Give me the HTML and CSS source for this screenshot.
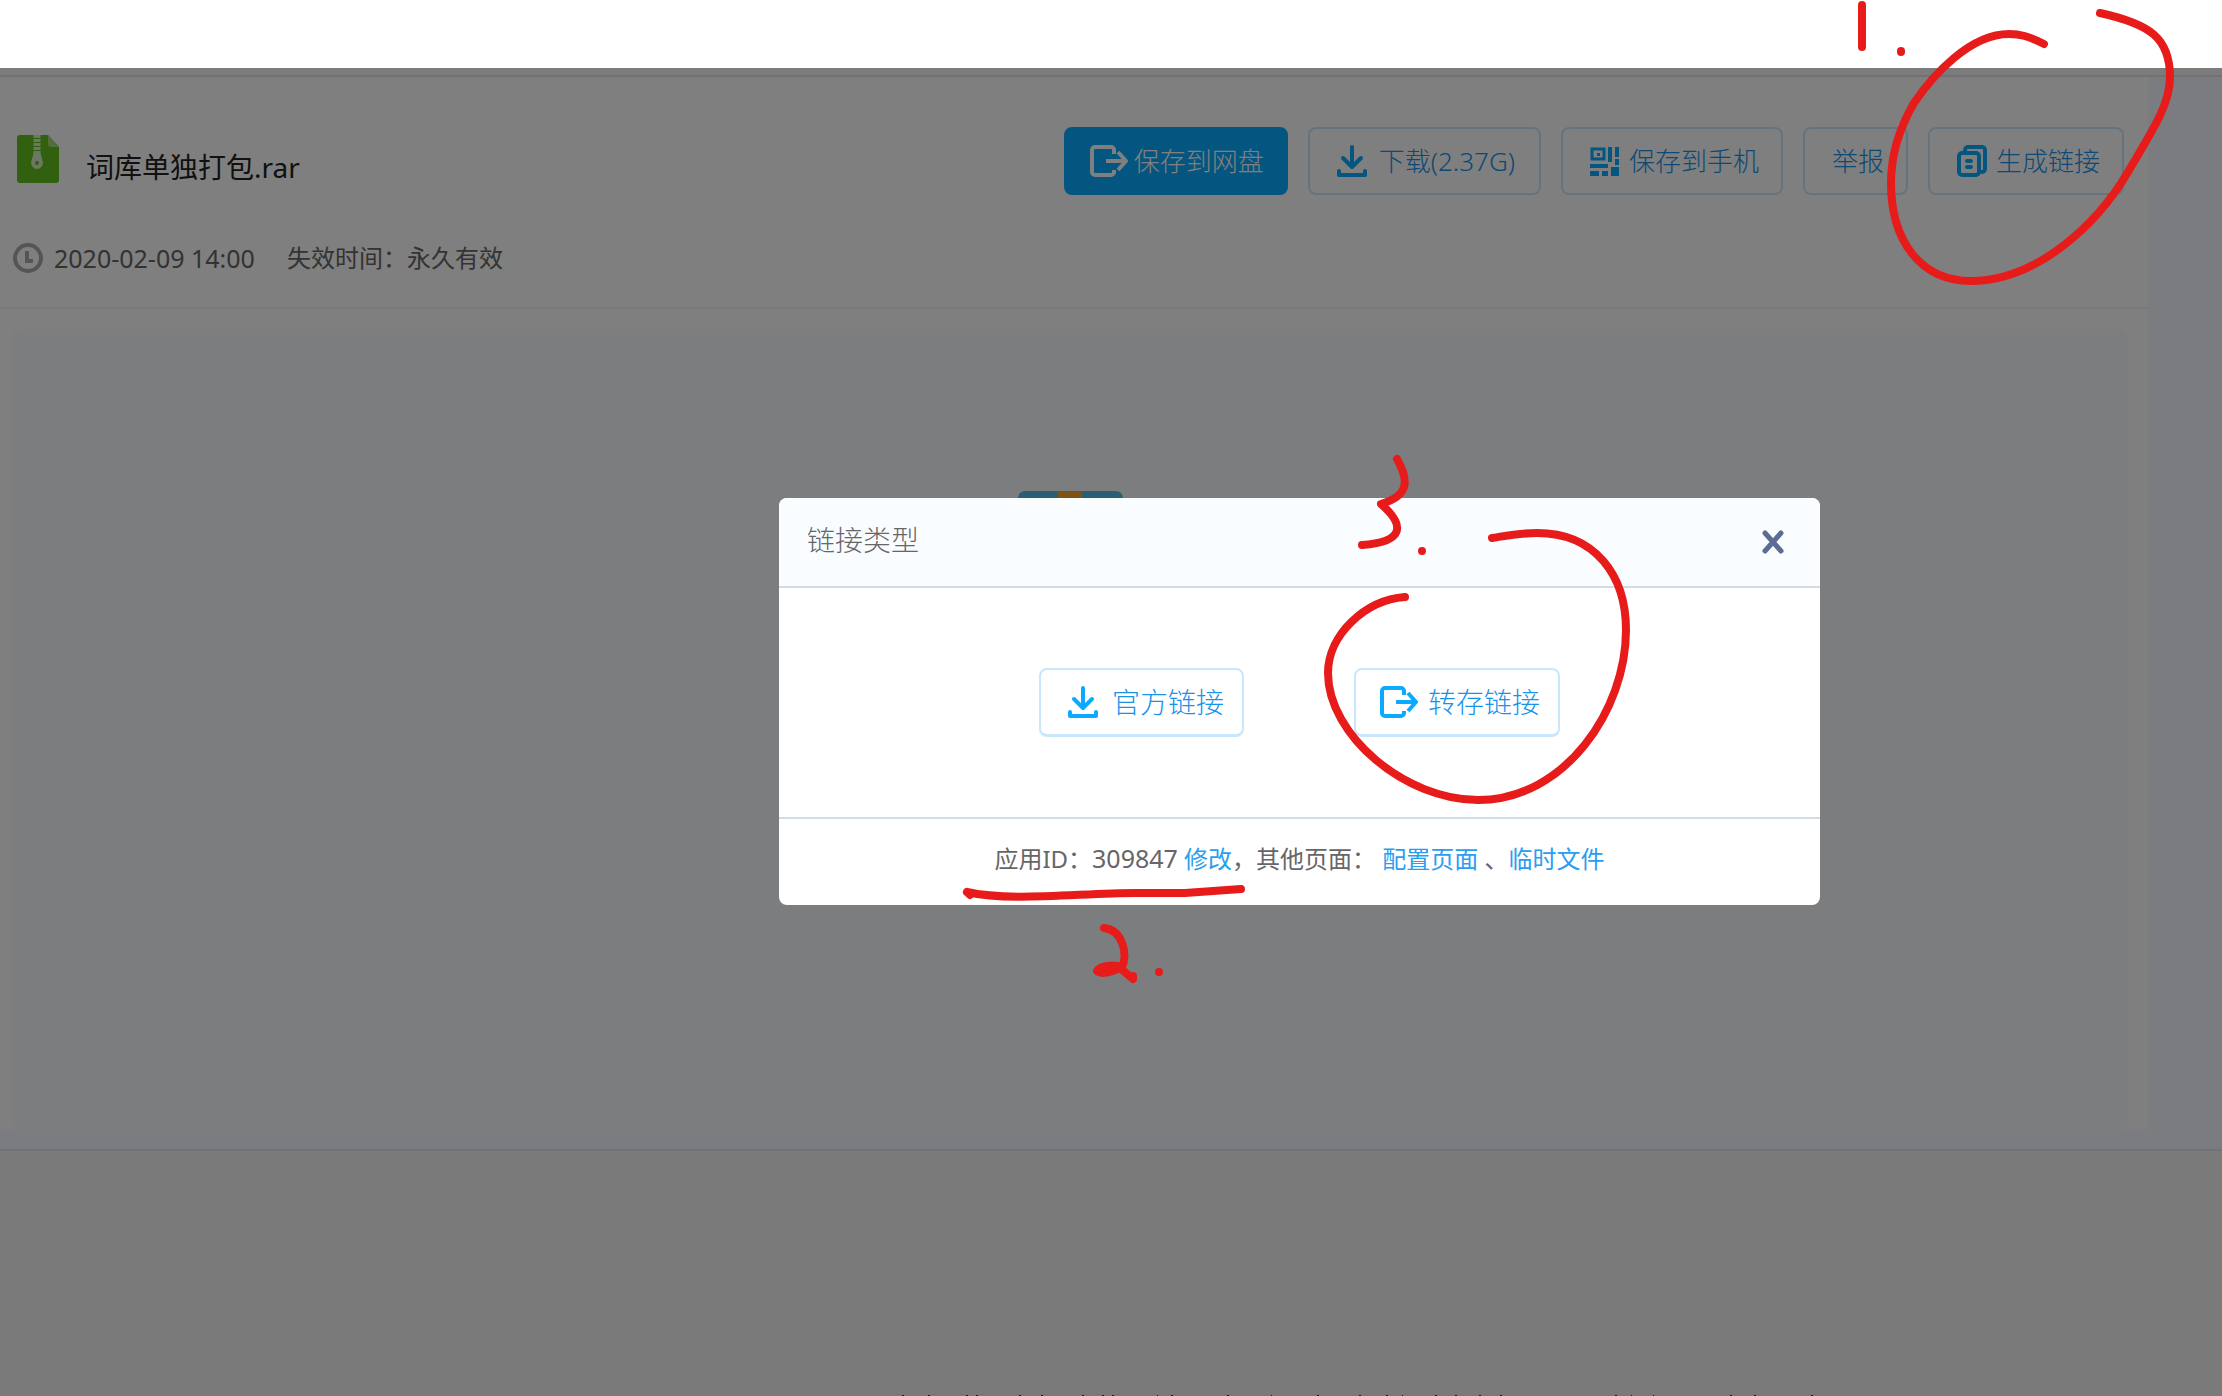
FILE: index.html
```html
<!DOCTYPE html>
<html lang="zh-CN">
<head>
<meta charset="utf-8">
<title>词库单独打包.rar</title>
<link rel="stylesheet" href="styles.css">
</head>
<body>
<svg class="symbols" aria-hidden="true">
  <symbol id="i-save" viewBox="0 0 38 32"><path d="M24 9V5a3 3 0 0 0-3-3H5a3 3 0 0 0-3 3v22a3 3 0 0 0 3 3h16a3 3 0 0 0 3-3v-2M16 16h18M28 7l8 9-8 9" fill="none" stroke="currentColor" stroke-width="4" stroke-linejoin="round"/></symbol>
  <symbol id="i-down" viewBox="0 0 30 32"><path d="M15 2v18M6 13l9 9 9-9" fill="none" stroke="currentColor" stroke-width="4" stroke-linecap="round" stroke-linejoin="round"/><path d="M2 26v4h26v-4" fill="none" stroke="currentColor" stroke-width="4" stroke-linecap="round" stroke-linejoin="round"/></symbol>
  <symbol id="i-qr" viewBox="0 0 30 30"><path d="M2 3h12v10H2z" fill="none" stroke="currentColor" stroke-width="3"/><path d="M7 7h3v3H7zM18 1h4v15h-4zM25 1h4v10h-4zM25 13h4v6h-4zM0 18h18v4H0zM0 25h9v5H0zM12 25h6v5h-6zM21 21h8v9h-8z" fill="currentColor"/></symbol>
  <symbol id="i-copy" viewBox="0 0 30 32"><path d="M8 6V5a3 3 0 0 1 3-3h14a3 3 0 0 1 3 3v19a3 3 0 0 1-3 3h-1" fill="none" stroke="currentColor" stroke-width="4"/><rect x="2" y="8" width="20" height="22" rx="3" fill="none" stroke="currentColor" stroke-width="4"/><path d="M10 16h4M10 22h4" stroke="currentColor" stroke-width="4" stroke-linecap="round"/></symbol>
</svg>
<div class="topbar"></div>
<div class="stage">
  <main class="page">
    <div class="gap"></div>
    <div class="content">
      <section class="card">
        <header class="card-head">
          <div class="file">
            <svg class="file-icon" viewBox="0 0 42 48"><path d="M3 0h28l11 12v33a3 3 0 0 1-3 3H3a3 3 0 0 1-3-3V3a3 3 0 0 1 3-3z" fill="#62c21c"/><path d="M31 0l11 12h-8a3 3 0 0 1-3-3z" fill="#a5dc7c"/><path d="M20 0v19" stroke="#d9efc8" stroke-width="7" stroke-dasharray="3 1"/><path d="M17 17h6l3 10a6 7 0 1 1-12 0z" fill="#d9efc8"/><circle cx="20" cy="28" r="2" fill="#62c21c"/></svg>
            <h1 class="file-name">词库单独打包.rar</h1>
          </div>
          <div class="actions">
            <button class="btn primary"><svg class="ic-save"><use href="#i-save"/></svg>保存到网盘</button>
            <button class="btn down"><svg class="ic"><use href="#i-down"/></svg>下载(2.37G)</button>
            <button class="btn"><svg class="ic"><use href="#i-qr"/></svg>保存到手机</button>
            <button class="btn">举报</button>
            <button class="btn"><svg class="ic"><use href="#i-copy"/></svg>生成链接</button>
          </div>
        </header>
        <div class="meta">
          <svg class="clock" viewBox="0 0 30 30"><circle cx="15" cy="15" r="13" fill="none" stroke="#aaa" stroke-width="4"/><path d="M14 8v10h6" fill="none" stroke="#aaa" stroke-width="4"/></svg>
          <time class="date">2020-02-09 14:00</time>
          <span>失效时间：永久有效</span>
        </div>
        <div class="preview">
          <svg class="archive" viewBox="0 0 105 120"><rect width="105" height="120" rx="7" fill="#55bfe8"/><rect x="40" width="24" height="120" fill="#fba62c"/></svg>
        </div>
      </section>
    </div>
    <footer class="foot">
      <svg class="foot-edge" viewBox="0 0 912 1" aria-hidden="true"><path d="M1 0h2M27 0h2M65 0h2M75 0h2M118 0h2M140 0h2M181 0h2M201 0h2M211 0h2M256 0h1M270 0h2M326 0h2M370 0h1M416 0h2M458 0h2M485 0h2M501 0h1M534 0h2M554 0h2M578 0h2M599 0h2M714 0h2M730 0h1M752 0h1M829 0h2M853 0h2M910 0h2" stroke="#333" stroke-width="2"/></svg>
    </footer>
  </main>
  <div class="mask"></div>
  <section class="dialog" role="dialog" aria-labelledby="dlg-title">
    <header class="dlg-head">
      <h2 class="dlg-title" id="dlg-title">链接类型</h2>
      <button class="close" aria-label="关闭"><svg class="close-ic" viewBox="0 0 22 24"><path d="M3 3l16 18M19 3L3 21" stroke="#5d6c94" stroke-width="5" stroke-linecap="round"/></svg></button>
    </header>
    <div class="dlg-body">
      <button class="btn big"><svg class="ic"><use href="#i-down"/></svg>官方链接</button>
      <button class="btn big wide-icon"><svg class="ic-save"><use href="#i-save"/></svg>转存链接</button>
    </div>
    <footer class="dlg-foot">
      <p class="note">应用ID：<span class="app-id">309847</span> <a href="#">修改</a>，其他页面： <a href="#">配置页面</a> 、<a href="#">临时文件</a></p>
    </footer>
  </section>
</div>
<svg class="ink" viewBox="0 0 2222 1396" aria-hidden="true">
  <path d="M1862 5v42M2044 44C2028 36 2020 34 2009 34C1970 34 1933 75 1914 103C1900 127 1891 155 1891 183C1891 240 1920 281 1971 281C2038 281 2098 223 2128 172C2152 131 2170 105 2170 77C2170 38 2150 24 2100 13"/>
  <path d="M1397 459C1410 482 1408 496 1381 504C1405 525 1405 542 1362 545M1405 597C1365 600 1328 635 1328 673C1328 735 1405 800 1478 800C1565 800 1626 710 1626 630C1626 575 1595 533 1537 533C1520 533 1505 536 1492 538"/>
  <path d="M967 892l3 3M967 892C1010 902 1080 893 1135 893H1185L1241 889M1104 928C1123 930 1128 955 1122 967C1112 964 1100 966 1097 971C1101 975 1112 972 1120 968L1133 979V976"/>
  <path d="M1901 51v1M1422 551h0M1159 972h0"/>
</svg>
</body>
</html>
```
FILE: styles.css
```css
* { box-sizing: border-box; }
body {
  margin: 0;
  min-height: 100vh;
  display: flex;
  flex-direction: column;
  overflow: hidden;
  background: #fff;
  color: #666;
  font: 24px/32px "Noto Sans", "Noto Sans CJK SC", sans-serif;
  position: relative;
}
h1, h2, p { margin: 0; font-weight: 400; }
a { color: #2b9df0; text-decoration: none; }
button { font: inherit; margin: 0; cursor: pointer; }
.symbols { position: absolute; width: 0; height: 0; }
.topbar { height: 68px; }
.stage { position: relative; flex: 1; display: flex; flex-direction: column; }
.page { flex: 1; display: flex; flex-direction: column; }
.gap { height: 9px; background: #f8f8fa; border-bottom: 2px solid #e2e4ea; }
.content { padding: 0 74px 20px 0; background: #f7f8ff; border-bottom: 2px solid #e2e4ea; }
.card { background: #fff; }
.card-head {
  display: flex;
  justify-content: space-between;
  align-items: center;
  padding: 50px 24px 0 17px;
}
.file { display: flex; align-items: flex-start; gap: 27px; }
.file-icon { width: 42px; height: 48px; }
.file-name { font-size: 28px; line-height: 40px; color: #222; padding-top: 12px; }
.actions { display: flex; gap: 20px; }
.btn {
  display: flex;
  align-items: center;
  gap: 9px;
  height: 68px;
  padding: 0 22px 0 27px;
  border: 2px solid #c9e7fb;
  border-radius: 8px;
  background: transparent;
  color: #1a92e8;
  font-size: 26px;
  font-weight: 300;
  white-space: nowrap;
}
.btn svg { color: #09aaff; }
.ic { width: 30px; height: 32px; }
.ic-save { width: 38px; height: 32px; }
.primary { background: #09aaff; border-color: #09aaff; color: #fff; padding: 0 22px 0 24px; gap: 6px; }
.primary svg { color: #fff; }
.down { padding-right: 24px; gap: 12px; }
.meta {
  display: flex;
  align-items: center;
  height: 114px;
  padding: 14px 13px 0;
  border-bottom: 2px solid #f0f2f4;
}
.clock { width: 30px; height: 30px; margin-right: 11px; }
.date { font-size: 25px; margin-right: 32px; }
.preview {
  height: 800px;
  margin: 20px 20px 0 13px;
  padding-top: 162px;
  border-radius: 8px;
  background: #f9fbfd;
  display: flex;
  justify-content: center;
}
.archive { width: 105px; height: 120px; }
.foot { flex: 1; background: #f5f5f5; display: flex; align-items: flex-end; justify-content: center; padding-left: 492px; }
.foot-edge { width: 912px; height: 1px; }
.mask { position: absolute; inset: 0; background: rgba(0, 0, 0, .5); }
.dialog {
  position: absolute;
  left: 779px;
  top: 430px;
  width: 1041px;
  border-radius: 8px;
  background: #fff;
  overflow: hidden;
}
.dlg-head {
  display: flex;
  align-items: center;
  justify-content: space-between;
  height: 90px;
  padding: 0 32px 0 28px;
  background: #f9fdff;
  border-bottom: 2px solid #d3dce2;
}
.dlg-title { font-size: 28px; font-weight: 300; line-height: 40px; padding-bottom: 4px; }
.close { padding: 4px; border: 0; background: none; display: flex; }
.close-ic { width: 22px; height: 24px; }
.dlg-body { display: flex; justify-content: center; gap: 110px; height: 229px; padding: 80px 0 0; }
.big { font-size: 28px; height: 69px; border-bottom-width: 3px; gap: 14px; padding: 0 18px 0 27px; }
.wide-icon { gap: 10px; padding-left: 24px; }
.dlg-foot { height: 88px; border-top: 2px solid #d3dce2; padding-top: 23px; text-align: center; }
.app-id { font-size: 25px; }
.ink {
  position: absolute;
  left: 0;
  top: 0;
  width: 2222px;
  height: 1396px;
  pointer-events: none;
  fill: none;
  stroke: #e81b1b;
  stroke-width: 8px;
  stroke-linecap: round;
  stroke-linejoin: round;
}
```
